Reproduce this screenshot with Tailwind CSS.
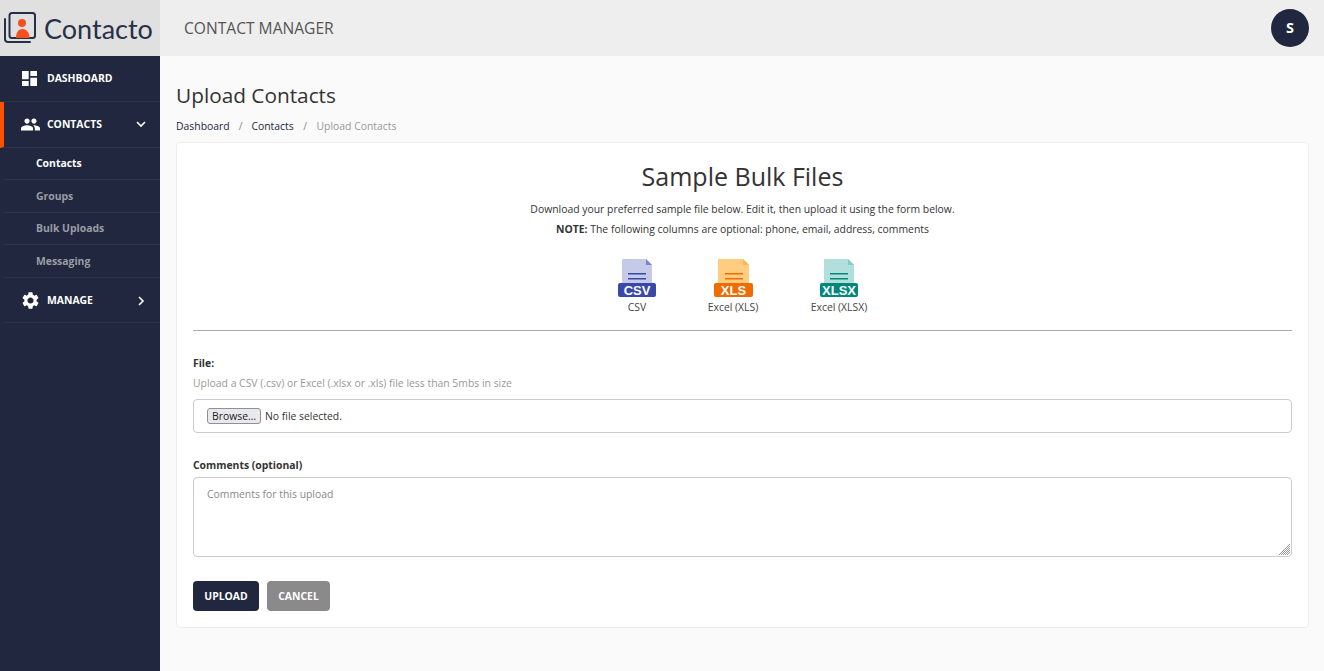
<!DOCTYPE html>
<html lang="en">
<head>
  <meta charset="UTF-8">
  <title>Upload Contacts - Contacto</title>
  <script src="https://cdn.jsdelivr.net/npm/@tailwindcss/browser@4"></script>
</head>
<body class="font-['Open_Sans',sans-serif] bg-[#fafafa] text-[#333]">
<div class="flex flex-col h-[671px] overflow-hidden">

  <!-- Header -->
  <header class="flex h-[56px] shrink-0 bg-[#eeeeee]">
    <div class="w-[160px] shrink-0 bg-[#e0e0e0] flex items-center pl-[4px] gap-[8px]">
      <svg class="w-[32px] h-[32px]" viewBox="0 0 32 32" fill="none">
        <path d="M1 7V27q0 3 3 3H26" stroke="#283048" stroke-width="2" stroke-linecap="round"/>
        <rect x="5.500" y="1" width="25.500" height="25" rx="2.500" stroke="#283048" stroke-width="2"/>
        <circle cx="18" cy="11" r="4" fill="#f4511e"/>
        <path d="M12 26c0-5 2-9 6.500-9s7 4 7 9z" fill="#f4511e"/>
      </svg>
      <span class="font-['Lato',sans-serif] text-[27px] leading-none text-[#283048] font-normal">Contacto</span>
    </div>
    <div class="flex-1 flex items-center justify-between pl-[24px] pr-[15px]">
      <span class="pt-[1px] text-[15.600px] text-[#555]">CONTACT MANAGER</span>
      <div class="w-[38px] h-[38px] rounded-full bg-[#20273e] text-white flex items-center justify-center text-[14.500px] font-bold">S</div>
    </div>
  </header>

  <div class="flex flex-1 min-h-0">
    <!-- Sidebar -->
    <aside class="w-[160px] shrink-0 bg-[#20273e] text-white">
      <a class="h-[46px] flex items-center border-b border-white/5 pl-[22px]">
        <svg class="w-[15px] h-[15px]" viewBox="3 3 18 18" fill="#fff"><path d="M3 13h8V3H3v10zm0 8h8v-6H3v6zm10 0h8V11h-8v10zm0-18v6h8V3h-8z"/></svg>
        <span class="ml-[10px] text-[10.400px] font-bold">DASHBOARD</span>
      </a>
      <a class="h-[46px] flex items-center border-b border-white/5 border-l-[4px] border-l-[#ff5000] pl-[17px] pr-[14px]">
        <svg class="w-[19px] h-[13px]" viewBox="1 5 22 14" fill="#fff"><path d="M16 11c1.660 0 2.990-1.340 2.990-3S17.660 5 16 5c-1.660 0-3 1.340-3 3s1.340 3 3 3zm-8 0c1.660 0 2.990-1.340 2.990-3S9.660 5 8 5C6.340 5 5 6.340 5 8s1.340 3 3 3zm0 2c-2.330 0-7 1.170-7 3.500V19h14v-2.500c0-2.330-4.670-3.500-7-3.500zm8 0c-.29 0-.62.02-.97.05 1.160.84 1.970 1.970 1.970 3.450V19h6v-2.500c0-2.330-4.670-3.500-7-3.500z"/></svg>
        <span class="ml-[7px] text-[10.400px] font-bold">CONTACTS</span>
        <svg class="ml-auto w-[10px] h-[7px]" viewBox="0 0 10 7" fill="none" stroke="#fff" stroke-width="1.600"><path d="M1 1l4 4 4-4"/></svg>
      </a>
      <a class="h-[32px] ml-[3px] flex items-center border-b border-white/5 pl-[33px] text-[10.400px] font-bold">Contacts</a>
      <a class="h-[33px] ml-[3px] flex items-center border-b border-white/5 pl-[33px] pt-[1px] text-[10.400px] font-bold text-[#9a9da6]">Groups</a>
      <a class="h-[32px] ml-[3px] flex items-center border-b border-white/5 pl-[33px] text-[10.400px] font-bold text-[#9a9da6]">Bulk Uploads</a>
      <a class="h-[33px] ml-[3px] flex items-center border-b border-white/5 pl-[33px] pt-[1px] text-[10.400px] font-bold text-[#9a9da6]">Messaging</a>
      <a class="h-[45px] ml-[3px] flex items-center border-b border-white/5 pl-[19px] pr-[15px] pt-[1px]">
        <svg class="w-[17px] h-[17px] -mt-[1px]" viewBox="2 2 20 20" fill="#fff"><path d="M19.140 12.940c.04-.3.06-.61.06-.94 0-.32-.02-.64-.07-.94l2.030-1.580a.49.49 0 0 0 .12-.61l-1.920-3.320a.488.488 0 0 0-.59-.22l-2.390.96c-.5-.38-1.030-.7-1.620-.94l-.36-2.540a.484.484 0 0 0-.48-.41h-3.840c-.24 0-.43.17-.47.41l-.36 2.540c-.59.24-1.130.57-1.620.94l-2.390-.96c-.22-.08-.47 0-.59.22L2.740 8.870c-.12.21-.08.47.12.61l2.030 1.580c-.05.3-.09.63-.09.94s.02.64.07.94l-2.030 1.580a.49.49 0 0 0-.12.61l1.920 3.320c.12.22.37.29.59.22l2.390-.96c.5.38 1.030.7 1.620.94l.36 2.540c.05.24.24.41.48.41h3.840c.24 0 .44-.17.47-.41l.36-2.540c.59-.24 1.130-.56 1.620-.94l2.390.96c.22.08.47 0 .59-.22l1.920-3.320c.12-.22.07-.47-.12-.61l-2.010-1.580zM12 15.600c-1.980 0-3.600-1.620-3.600-3.600s1.620-3.600 3.600-3.600 3.600 1.620 3.600 3.600-1.620 3.600-3.600 3.600z"/></svg>
        <span class="ml-[8px] text-[10.400px] font-bold">MANAGE</span>
        <svg class="ml-auto w-[7px] h-[10px]" viewBox="0 0 7 10" fill="none" stroke="#fff" stroke-width="1.600"><path d="M1 1l4 4-4 4"/></svg>
      </a>
    </aside>

    <!-- Content -->
    <main class="flex-1 min-w-0 pl-[16px] pr-[15px]">
      <h1 class="mt-[24px] text-[20.800px] leading-[30px] text-[#333]">Upload Contacts</h1>
      <nav class="mt-[8px] flex items-center text-[10.400px] leading-[16px]">
        <span class="text-[#20273e]">Dashboard</span>
        <span class="mx-[9px] text-[#888]">/</span>
        <span class="text-[#20273e]">Contacts</span>
        <span class="mx-[9.500px] text-[#888]">/</span>
        <span class="text-[#999]">Upload Contacts</span>
      </nav>

      <section class="mt-[8px] bg-white border border-[#eeeeee] rounded-[4px] h-[486px] px-[16px]">
        <h2 class="mt-[15px] text-center text-[25px] leading-[34px] text-[#333] pt-[1px]">Sample Bulk Files</h2>
        <p class="mt-[6px] text-center text-[10.400px] leading-[20px]">Download your preferred sample file below. Edit it, then upload it using the form below.</p>
        <p class="text-center text-[10.400px] leading-[20px]"><b>NOTE:</b> The following columns are optional: phone, email, address, comments</p>

        <div class="mt-[20px] ml-[1px] flex justify-center items-start h-[55px]">
          <div class="w-[96px] flex flex-col items-center">
            <svg class="w-[38px] h-[38px]" viewBox="0 0 38 38">
              <path d="M4 0h24l6 6v24H4z" fill="#c5cae9"/><path d="M28 0l6 6h-6z" fill="#7986cb"/>
              <rect x="10" y="14" width="18" height="1.500" fill="#3949ab"/><rect x="10" y="19" width="18" height="1.500" fill="#3949ab"/>
              <rect x="0" y="24" width="38" height="14" rx="2" fill="#3949ab"/>
              <text x="19" y="35.500" text-anchor="middle" font-family="Liberation Sans" font-weight="700" font-size="13" fill="#fff">CSV</text>
            </svg>
            <span class="mt-[2px] text-[10.400px] leading-[16px] text-[#444]">CSV</span>
          </div>
          <div class="w-[96px] flex flex-col items-center">
            <svg class="w-[39px] h-[38px]" viewBox="0 0 39 38">
              <path d="M4 0h25l6 6v24H4z" fill="#ffcc80"/><path d="M29 0l6 6h-6z" fill="#ffb74d"/>
              <rect x="11" y="14" width="18" height="1.500" fill="#ef6c00"/><rect x="11" y="19" width="18" height="1.500" fill="#ef6c00"/>
              <rect x="0" y="24" width="39" height="14" rx="2" fill="#ef6c00"/>
              <text x="19.500" y="35.500" text-anchor="middle" font-family="Liberation Sans" font-weight="700" font-size="13" fill="#fff">XLS</text>
            </svg>
            <span class="mt-[2px] text-[10.400px] leading-[16px] text-[#444]">Excel (XLS)</span>
          </div>
          <div class="w-[116px] flex flex-col items-center">
            <svg class="w-[38px] h-[38px]" viewBox="0 0 38 38">
              <path d="M4 0h24l6 6v24H4z" fill="#b2dfdb"/><path d="M28 0l6 6h-6z" fill="#80cbc4"/>
              <rect x="10" y="14" width="18" height="1.500" fill="#00897b"/><rect x="10" y="19" width="18" height="1.500" fill="#00897b"/>
              <rect x="0" y="24" width="38" height="14" rx="2" fill="#00897b"/>
              <text x="19" y="35.500" text-anchor="middle" font-family="Liberation Sans" font-weight="700" font-size="13" fill="#fff">XLSX</text>
            </svg>
            <span class="mt-[2px] text-[10.400px] leading-[16px] text-[#444]">Excel (XLSX)</span>
          </div>
        </div>

        <hr class="mt-[16px] border-0 border-t border-[#aaaaaa]">

        <form>
          <label class="block mt-[24px] text-[10.400px] leading-[16px] font-bold">File:</label>
          <p class="mt-[4px] text-[10.400px] leading-[16px] text-[#999]">Upload a CSV (.csv) or Excel (.xlsx or .xls) file less than 5mbs in size</p>
          <div class="mt-[8px] h-[34px] border border-[#cccccc] rounded-[4px] flex items-center pl-[13px]">
            <button type="button" class="h-[16px] w-[54px] bg-[#e9e9ed] border border-[#8f8f9d] rounded-[3px] text-[10.400px] leading-none text-[#222]">Browse…</button>
            <span class="ml-[4px] pt-[1px] text-[10.400px] text-[#333]">No file selected.</span>
          </div>
          <label class="block mt-[24px] text-[10.400px] leading-[16px] font-bold">Comments (optional)</label>
          <div class="relative mt-[4px]">
            <textarea class="block w-full h-[80px] resize-none border border-[#cccccc] rounded-[4px] px-[13px] py-[8px] text-[10.400px] leading-[16px] placeholder:text-[#888]" placeholder="Comments for this upload"></textarea>
            <!-- resize grip -->
            <svg class="absolute right-[2px] bottom-[2px] w-[11px] h-[11px]" viewBox="0 0 11 11" stroke="#999" stroke-width="1"><path d="M0 11L11 0M2 11l9-9M4 11l7-7M6 11l5-5M8 11l3-3"/></svg>
          </div>
          <div class="mt-[24px] flex gap-[8px]">
            <button type="button" class="h-[30px] w-[66px] pt-[1px] rounded-[4px] bg-[#20273e] text-white text-[10.400px] font-bold">UPLOAD</button>
            <button type="button" class="h-[30px] w-[63px] pt-[1px] rounded-[4px] bg-[#8a8a8a] text-white text-[10.400px] font-bold">CANCEL</button>
          </div>
        </form>
      </section>
    </main>
  </div>
</div>
</body>
</html>
